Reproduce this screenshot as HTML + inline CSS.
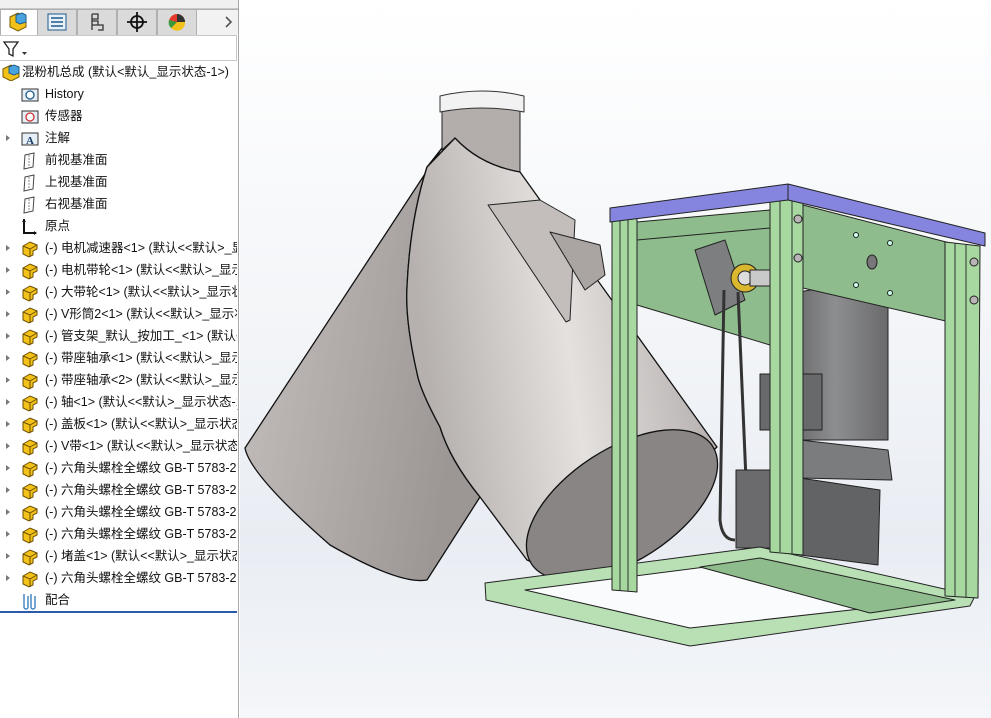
<!DOCTYPE html>
<html><head><meta charset="utf-8"><style>
*{margin:0;padding:0;box-sizing:border-box}
body{width:991px;height:718px;overflow:hidden;background:#fff;font-family:"Liberation Sans","Noto Sans CJK SC",sans-serif;font-size:12.5px;color:#111;position:relative}
#panel{position:absolute;left:0;top:0;width:239px;height:718px;background:#fff;border-right:1px solid #a8a8a8;overflow:hidden}
.tab{position:absolute;top:9px;height:26px;width:40px;background:#dadada;border:1px solid #b0b0b0;border-bottom:none}
.row{position:absolute;left:0;height:22px;line-height:22px;white-space:nowrap;width:237px;overflow:hidden}
.arr{position:absolute;left:6px;top:8px;width:0;height:0;border-left:4px solid #777;border-top:3px solid transparent;border-bottom:3px solid transparent}
.txt{position:absolute;left:45px;top:0}
.ic{position:absolute;left:21px;top:3px}
#view{position:absolute;left:240px;top:0;width:751px;height:718px;background:linear-gradient(180deg,#ffffff 0%,#f3f5f8 45%,#e9edf3 75%,#f4f6f9 100%)}
</style></head><body>
<div id="panel">
 <div style="position:absolute;left:0;top:0;width:238px;height:9px;background:#f0f0f0;border-bottom:1px solid #c8c8c8"></div>
 <div class="tab" style="left:0;width:38px;background:#fff"></div>
 <div class="tab" style="left:37px"></div>
 <div class="tab" style="left:77px"></div>
 <div class="tab" style="left:117px"></div>
 <div class="tab" style="left:157px"></div>
 <div style="position:absolute;left:197px;top:9px;width:41px;height:26px;background:#f2f2f2;border-top:1px solid #b0b0b0"></div>
 <svg style="position:absolute;left:0;top:9px" width="238" height="26">
  <path d="M10 8 L18 4 L26 8 L26 18 L18 22 L10 18Z" fill="#f2c21a" stroke="#7a5a00"/>
  <path d="M16 6 L22 4 L26 6 L26 13 L20 15 L16 13Z" fill="#4aa3df" stroke="#1c5d8a"/>
  <rect x="48" y="5" width="18" height="16" fill="#e8f0f8" stroke="#1d5b8c"/>
  <path d="M51 9h12M51 13h12M51 17h12" stroke="#1d5b8c" stroke-width="1.5"/>
  <path d="M92 5v16M92 5h6v5h-6M92 12h6v4h-6M98 16h5v5h-5" fill="none" stroke="#333" stroke-width="1.3"/>
  <circle cx="137" cy="13" r="6" fill="none" stroke="#111" stroke-width="1.8"/>
  <path d="M137 3v20M127 13h20" stroke="#111" stroke-width="1.8"/>
  <circle cx="177" cy="13" r="8" fill="#e53a2b"/>
  <path d="M177 13 L177 5 A8 8 0 0 1 185 13Z" fill="#333"/>
  <path d="M177 13 L185 13 A8 8 0 0 1 171 19Z" fill="#f2c21a"/>
  <path d="M177 13 L171 19 A8 8 0 0 1 169 11Z" fill="#3a9a3a"/>
  <path d="M226 8 l5 5 l-5 5" fill="none" stroke="#555" stroke-width="1.6"/>
 </svg>
 <div style="position:absolute;left:0;top:35px;width:237px;height:26px;border:1px solid #c8c8c8;border-left:none;background:#fff"></div>
 <svg style="position:absolute;left:3px;top:40px" width="26" height="18"><path d="M1 2h14l-5 7v7l-4-2v-5Z" fill="#fff" stroke="#222" stroke-width="1.3"/><path d="M19 12h5l-2.5 3z" fill="#333"/></svg>

 <div class="row" style="top:61px"><svg style="position:absolute;left:2px;top:2px" width="18" height="18"><path d="M1 6 L9 2 L17 6 L17 14 L9 18 L1 14Z" fill="#f2c21a" stroke="#7a5a00"/><path d="M7 4 L12 2 L17 4 L17 10 L12 12 L7 10Z" fill="#4aa3df" stroke="#1c5d8a"/></svg><span class="txt" style="left:22px">混粉机总成 (默认&lt;默认_显示状态-1&gt;)</span></div>
 <div class="row" style="top:83px"><svg class="ic" width="18" height="16"><rect x="1" y="3" width="16" height="12" fill="#e6eef6" stroke="#333"/><circle cx="9" cy="9" r="4" fill="#fff" stroke="#1d5b8c" stroke-width="1.3"/></svg><span class="txt">History</span></div>
 <div class="row" style="top:105px"><svg class="ic" width="18" height="16"><rect x="1" y="3" width="16" height="12" fill="#e6eef6" stroke="#333"/><circle cx="9" cy="9" r="4" fill="#fff" stroke="#c33" stroke-width="1.3"/></svg><span class="txt">传感器</span></div>
 <div class="row" style="top:127px"><div class="arr"></div><svg class="ic" width="18" height="16"><rect x="1" y="3" width="16" height="12" fill="#e6eef6" stroke="#333"/><text x="5" y="14" font-size="11" font-family="Liberation Serif" fill="#1d3d6c" font-weight="bold">A</text></svg><span class="txt">注解</span></div>
 <div class="row" style="top:149px"><svg class="ic" width="16" height="18"><path d="M4 3 L13 1 L12 15 L3 17Z" fill="none" stroke="#444"/><path d="M8 3v13" stroke="#888" stroke-dasharray="2 1"/></svg><span class="txt">前视基准面</span></div>
 <div class="row" style="top:171px"><svg class="ic" width="16" height="18"><path d="M4 3 L13 1 L12 15 L3 17Z" fill="none" stroke="#444"/><path d="M8 3v13" stroke="#888" stroke-dasharray="2 1"/></svg><span class="txt">上视基准面</span></div>
 <div class="row" style="top:193px"><svg class="ic" width="16" height="18"><path d="M4 3 L13 1 L12 15 L3 17Z" fill="none" stroke="#444"/><path d="M8 3v13" stroke="#888" stroke-dasharray="2 1"/></svg><span class="txt">右视基准面</span></div>
 <div class="row" style="top:215px"><svg class="ic" width="18" height="18"><path d="M3 1v14h12" fill="none" stroke="#111" stroke-width="2"/><path d="M1 4l2-3 2 3M13 13l3 2-3 2" fill="#111"/></svg><span class="txt">原点</span></div>

 <div id="parts"></div>
 <div style="position:absolute;left:0;top:611px;width:237px;height:2px;background:#2a5aa8"></div>
 <div style="position:absolute;left:237px;top:372px;width:9px;height:38px;background:#fff;border:1px solid #aaa;border-left:none"></div>
</div>
<div class="row" style="top:589px;left:0;position:absolute"><svg class="ic" width="18" height="18"><path d="M3 2v13a2 2 0 0 0 4 0V4M10 2v13a2 2 0 0 0 4 0V4" fill="none" stroke="#3a7fc0" stroke-width="1.4"/></svg><span class="txt">配合</span></div>

<div id="view">
<svg width="751" height="718" viewBox="240 0 751 718" style="position:absolute;left:0;top:0" stroke-linejoin="round">
 <defs>
  <linearGradient id="gc" x1="0" y1="0.2" x2="1" y2="0"><stop offset="0" stop-color="#b6b1af"/><stop offset="0.45" stop-color="#e4e1df"/><stop offset="1" stop-color="#a8a2a1"/></linearGradient>
  <linearGradient id="gl" x1="0" y1="0" x2="1" y2="0.3"><stop offset="0" stop-color="#c6c1bf"/><stop offset="1" stop-color="#9c9695"/></linearGradient>
  <linearGradient id="gm" x1="0" y1="0" x2="1" y2="0"><stop offset="0" stop-color="#6f6f70"/><stop offset="0.4" stop-color="#8d8e90"/><stop offset="1" stop-color="#6a6a6c"/></linearGradient>
 </defs>
 <!-- pipe -->
 <path d="M442 108 L520 108 L520 172 Q480 165 455 138 L442 150Z" fill="#b3aeac" stroke="#222"/>
 <path d="M440 96 Q482 86 524 96 L524 112 Q482 104 440 112Z" fill="#f2f2f2" stroke="#333"/>
 <!-- left cone -->
 <path d="M442 148 L245 448 Q250 475 330 545 Q400 585 427 580 L480 497 Q450 460 440 427 Q420 390 417 373 Q405 320 407 287 Q410 220 427 167Z" fill="url(#gl)" stroke="#111" stroke-width="1.3"/>
 <!-- right cylinder -->
 <path d="M427 167 L455 138 Q480 165 520 172 L717 447 L573 580 L527 560 L480 497 Q450 460 440 427 Q420 390 417 373 Q405 320 407 287 Q410 220 427 167Z" fill="url(#gc)" stroke="#111" stroke-width="1.3"/>
 <path d="M488 205 L540 200 L575 220 L570 320 L566 322Z" fill="#c3bebc" stroke="#222"/>
 <path d="M550 232 L600 245 L605 275 L585 290 Z" fill="#aaa5a3" stroke="#222"/>
 <ellipse cx="622" cy="505" rx="108" ry="56" transform="rotate(-33 622 505)" fill="#8a8585" stroke="#111" stroke-width="1.3"/>
 <!-- back beam left -->
 <path d="M637 222 L770 210 L770 345 L637 305Z" fill="#8fbc8c" stroke="#222"/>
 <path d="M637 240 L770 228" stroke="#222"/>
 <!-- bearing -->
 <path d="M695 250 L725 240 L745 300 L715 315Z" fill="#7d7e80" stroke="#222"/>
 <circle cx="745" cy="278" r="14" fill="#d9b830" stroke="#222"/>
 <circle cx="745" cy="278" r="7" fill="#ddd" stroke="#222"/>
 <rect x="750" y="270" width="22" height="16" fill="#c9c9c9" stroke="#222"/>
 <!-- belt -->
 <path d="M724 290 L720 520 Q722 540 735 540 M738 292 L746 480" fill="none" stroke="#333" stroke-width="3"/>
 <rect x="736" y="470" width="36" height="78" fill="#6b6b6d" stroke="#222"/>
 <!-- motor -->
 <path d="M800 292 Q845 282 888 300 L888 440 L800 440Z" fill="url(#gm)" stroke="#222"/>
 <rect x="760" y="374" width="62" height="56" fill="#68696b" stroke="#222"/>
 <path d="M800 440 L888 450 L892 480 L800 478Z" fill="#7b7c7e" stroke="#222"/>
 <path d="M800 478 L880 490 L878 565 L800 555Z" fill="#626365" stroke="#222"/>
 <!-- right back plate -->
 <path d="M803 205 L950 243 L950 322 L803 288Z" fill="#8fbc8c" stroke="#222"/>
 <ellipse cx="872" cy="262" rx="5" ry="7" fill="#777" stroke="#222"/>
 <circle cx="856" cy="235" r="2.5" fill="#cfe" stroke="#222"/><circle cx="890" cy="243" r="2.5" fill="#cfe" stroke="#222"/>
 <circle cx="856" cy="285" r="2.5" fill="#cfe" stroke="#222"/><circle cx="890" cy="293" r="2.5" fill="#cfe" stroke="#222"/>
 <!-- bottom frame -->
 <path d="M485 583 L760 547 L975 596 L970 606 L690 646 L486 600Z" fill="#b8e0b4" stroke="#222"/>
 <path d="M525 590 L760 560 L940 600 L690 628Z" fill="#fafbfc" stroke="#222"/>
 <path d="M700 567 L760 558 L955 600 L870 613 Z" fill="#8fbc8c" stroke="#222"/>
 <!-- posts -->
 <path d="M612 220 L637 218 L637 592 L612 590Z" fill="#a6d8a0" stroke="#222"/>
 <path d="M620 220 L620 590M628 219 L628 591" stroke="#333"/>
 <path d="M770 200 L803 198 L803 555 L770 552Z" fill="#a6d8a0" stroke="#222"/>
 <path d="M780 200 V552 M792 199 V554" stroke="#333"/>
 <path d="M945 242 L980 246 L978 598 L945 596Z" fill="#a6d8a0" stroke="#222"/>
 <path d="M955 243 V597 M966 245 V598" stroke="#333"/>
 <circle cx="798" cy="219" r="4" fill="#b9b4b6" stroke="#222"/><circle cx="798" cy="258" r="4" fill="#b9b4b6" stroke="#222"/>
 <circle cx="974" cy="262" r="4" fill="#b9b4b6" stroke="#222"/><circle cx="974" cy="300" r="4" fill="#b9b4b6" stroke="#222"/>
 <!-- top plate -->
 <path d="M610 208 L788 184 L985 233 L985 246 L788 200 L610 222Z" fill="#8585e0" stroke="#222"/>
 <path d="M788 184 L788 200" stroke="#222"/>
</svg>
</div>
<script>
var items=["电机减速器<1> (默认<<默认>_显示状态-1>)","电机带轮<1> (默认<<默认>_显示状态-1>)","大带轮<1> (默认<<默认>_显示状态-1>)","V形筒2<1> (默认<<默认>_显示状态-1>)","管支架_默认_按加工_<1> (默认<<默认>)","带座轴承<1> (默认<<默认>_显示状态-1>)","带座轴承<2> (默认<<默认>_显示状态-1>)","轴<1> (默认<<默认>_显示状态-1>)","盖板<1> (默认<<默认>_显示状态-1>)","V带<1> (默认<<默认>_显示状态-1>)","六角头螺栓全螺纹 GB-T 5783-2000","六角头螺栓全螺纹 GB-T 5783-2000","六角头螺栓全螺纹 GB-T 5783-2000","六角头螺栓全螺纹 GB-T 5783-2000","堵盖<1> (默认<<默认>_显示状态-1>)","六角头螺栓全螺纹 GB-T 5783-2000"];
var h="";
items.forEach(function(t,i){var y=237+i*22;
h+='<div class="row" style="top:'+y+'px"><div class="arr"></div><svg class="ic" width="20" height="18"><path d="M2 6 L9 2 L16 5 L16 9 L12 11 L12 15 L8 17 L2 14Z" fill="#f2c21a" stroke="#6a4d00"/><path d="M2 6 L9 9 L16 5 M9 9 L9 17" fill="none" stroke="#6a4d00"/></svg><span class="txt">(-) '+t.replace(/</g,"&lt;").replace(/>/g,"&gt;")+'</span></div>';});
document.getElementById("parts").innerHTML=h;
</script>
</body></html>
